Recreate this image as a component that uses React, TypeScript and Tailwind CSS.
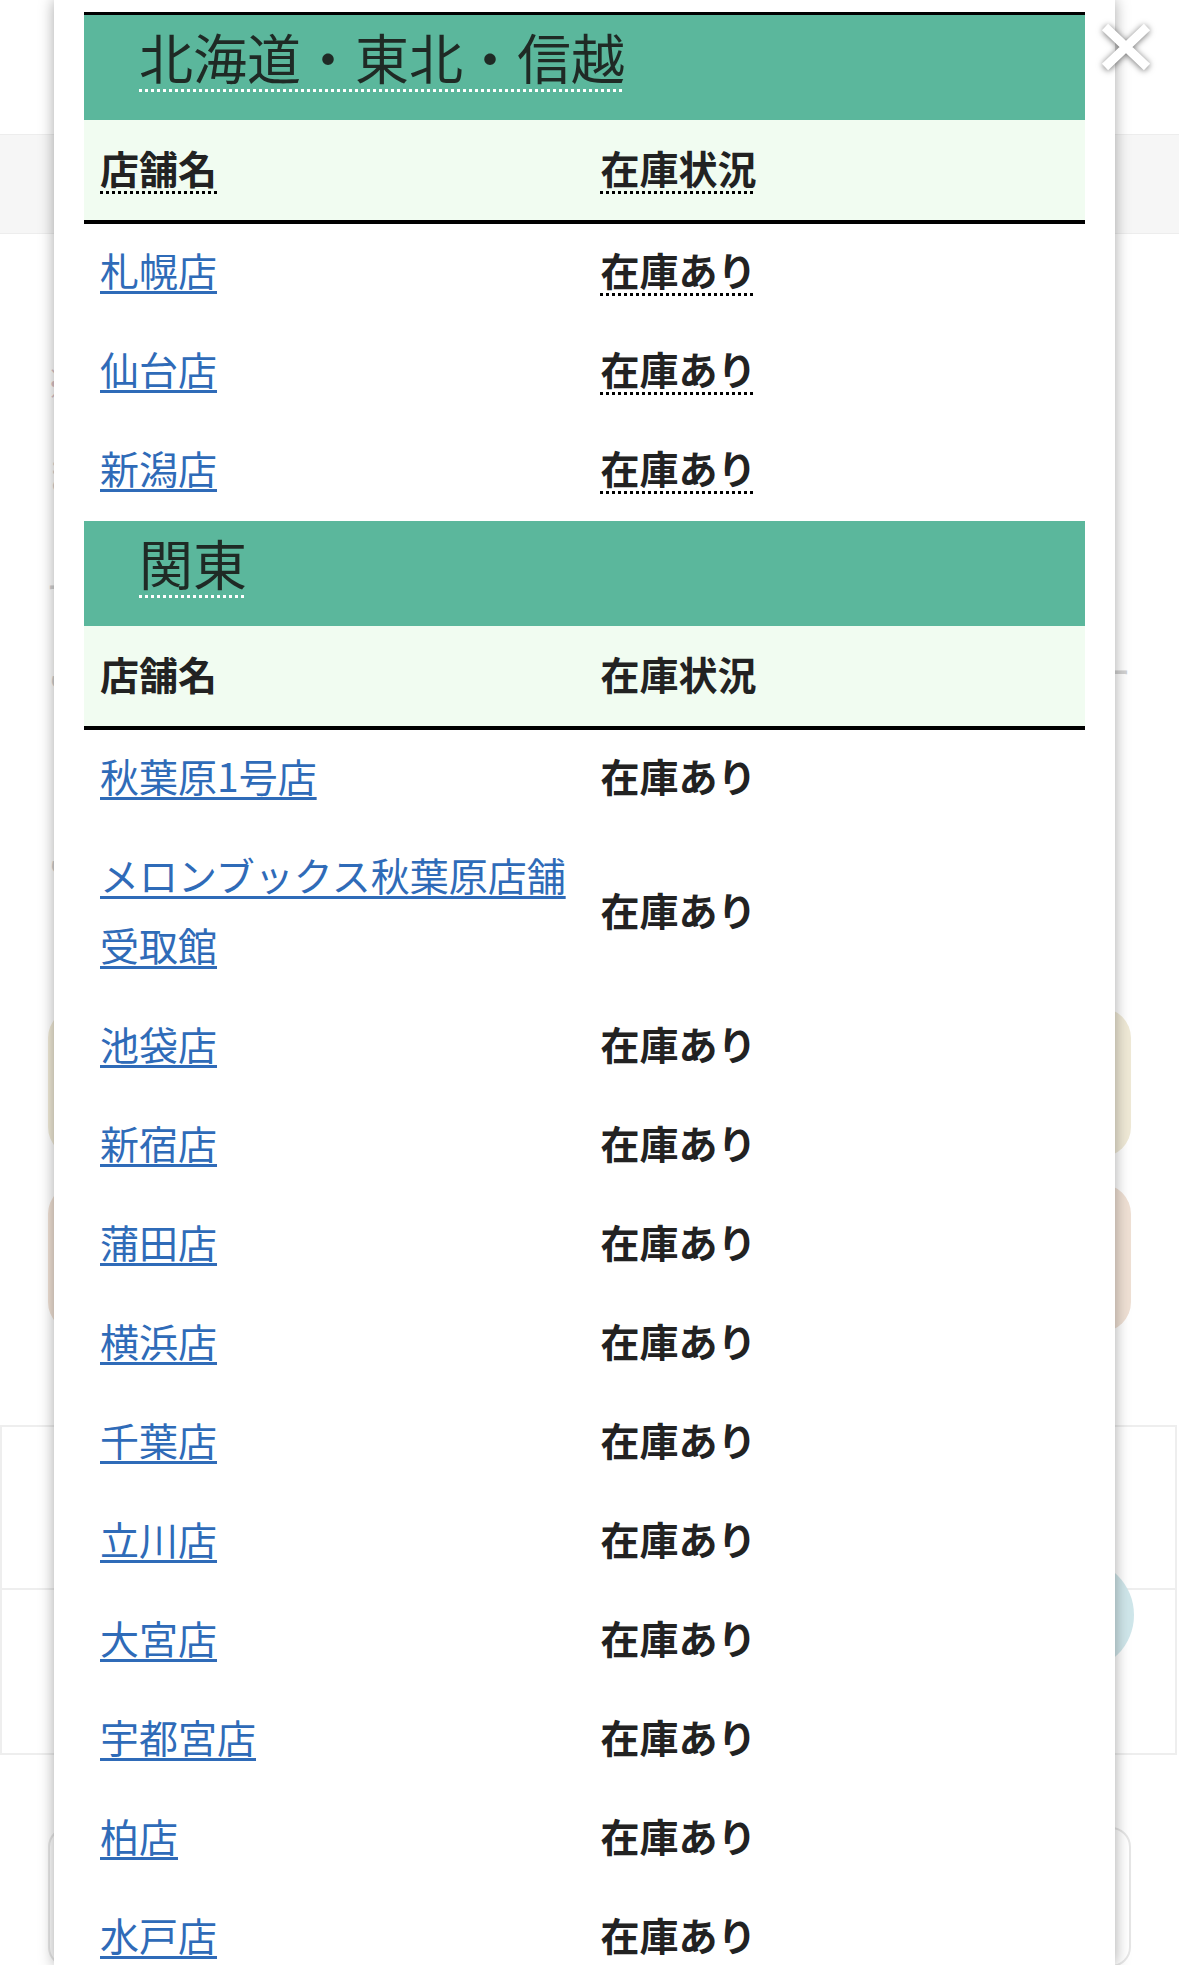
import React from "react"

type Row = { name: string; status: string }

const hokkaido: Row[] = [
  { name: "札幌店", status: "在庫あり" },
  { name: "仙台店", status: "在庫あり" },
  { name: "新潟店", status: "在庫あり" },
]

const kanto: Row[] = [
  { name: "秋葉原1号店", status: "在庫あり" },
  { name: "メロンブックス秋葉原店舗受取館", status: "在庫あり" },
  { name: "池袋店", status: "在庫あり" },
  { name: "新宿店", status: "在庫あり" },
  { name: "蒲田店", status: "在庫あり" },
  { name: "横浜店", status: "在庫あり" },
  { name: "千葉店", status: "在庫あり" },
  { name: "立川店", status: "在庫あり" },
  { name: "大宮店", status: "在庫あり" },
  { name: "宇都宮店", status: "在庫あり" },
  { name: "柏店", status: "在庫あり" },
  { name: "水戸店", status: "在庫あり" },
]

function Section({ title, rows, dotted }: { title: string; rows: Row[]; dotted?: boolean }) {
  const dot = dotted ? "underline decoration-dotted decoration-[3px] decoration-black underline-offset-[7px]" : ""
  return (
    <div>
      <div className="h-[105px] bg-[#5bb79c] pl-[55px] pt-[4px]">
        <span className="text-[54px] leading-[75px] font-normal text-[#1f2a25] underline decoration-dotted decoration-[3px] decoration-white underline-offset-[9px]">
          {title}
        </span>
      </div>
      <div className="grid grid-cols-2 bg-[#f1fcf1] border-b-4 border-black">
        <div className="pl-[16px] pt-[12px] pb-[18px] leading-[70px] font-bold">
          <span className={dot}>店舗名</span>
        </div>
        <div className="pl-[16px] pt-[12px] pb-[18px] leading-[70px] font-bold">
          <span className={dot}>在庫状況</span>
        </div>
      </div>
      {rows.map((r) => (
        <div key={r.name} className="grid grid-cols-2 items-center">
          <div className="pl-[16px] pr-[12px] pt-[10px] pb-[19px] leading-[70px]">
            <a href="#" className="text-[#2f6bb8] underline decoration-[3px] underline-offset-[5px]">
              {r.name}
            </a>
          </div>
          <div className="pl-[16px] pt-[10px] pb-[19px] leading-[70px] font-bold">
            <span className={dot}>{r.status}</span>
          </div>
        </div>
      ))}
    </div>
  )
}

export default function App() {
  return (
    <div className="relative h-[1965px] w-[1179px] overflow-hidden bg-white text-[39px] text-[#222] font-['Noto_Sans_CJK_JP',sans-serif]">
      {/* page behind the modal, faded */}
      <div className="pt-[134px]">
        <div className="h-[100px] border-y border-[#ededed] bg-[#f6f6f6]" />
        <div className="h-[774px] px-[46px] pt-[127px] leading-[40px] text-[#d2d2d2]">
          <div className="text-[#dbc4c8]">※</div>
          <div className="mt-[51px]">ま</div>
          <div className="mt-[73px]">ー</div>
          <div className="mt-[45px] flex justify-between">
            <span>ご</span>
            <span className="pr-[2px]">ー</span>
          </div>
          <div className="mt-[145px]">ご</div>
        </div>
        <div className="flex flex-col gap-[27px] px-[48px]">
          <div className="h-[149px] rounded-[30px] bg-[#efe9d6]" />
          <div className="h-[148px] rounded-[30px] bg-[#efe0d4]" />
        </div>
        <div className="mt-[93px] mr-[2px] border-2 border-[#eeeeee]">
          <div className="h-[163px] border-b-2 border-[#eeeeee]" />
          <div className="h-[163px]" />
        </div>
        <div className="mx-[48px] mt-[72px] h-[140px] rounded-[20px] border-2 border-[#e6e6e6]" />
      </div>
      <div className="absolute left-[1022px] top-[1559px] h-[112px] w-[112px] rounded-full bg-[#cfe6ea]" />

      {/* modal */}
      <div className="absolute left-[54px] top-0 h-[1965px] w-[1061px] bg-white px-[30px] pt-[12px] shadow-[0_0_14px_rgba(0,0,0,0.35)]">
        <div className="border-t-[3px] border-black">
          <Section title="北海道・東北・信越" rows={hokkaido} dotted />
          <Section title="関東" rows={kanto} />
        </div>
      </div>

      {/* close */}
      <button className="absolute left-[1100px] top-[22px] h-[50px] w-[52px]">
        <svg viewBox="0 0 52 50" className="h-full w-full drop-shadow-[0_1px_3px_rgba(0,0,0,0.55)]">
          <path d="M5 5 L47 45 M47 5 L5 45" stroke="white" strokeWidth="9" strokeLinecap="butt" fill="none" />
        </svg>
      </button>
    </div>
  )
}
